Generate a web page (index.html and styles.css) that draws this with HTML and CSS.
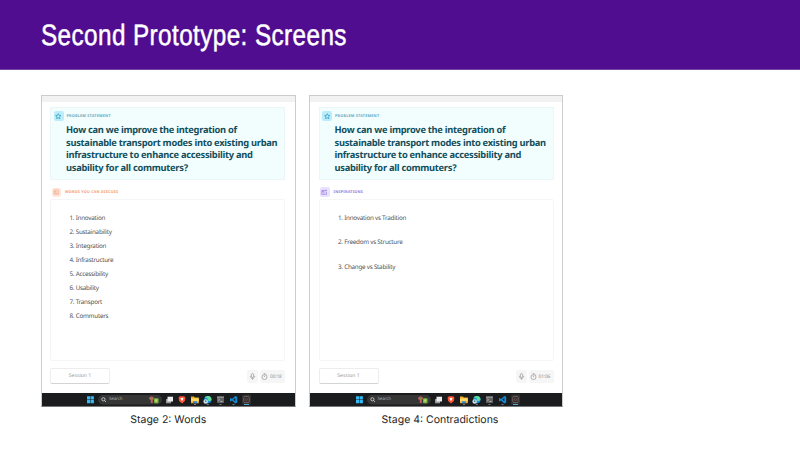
FILE: index.html
```html
<!DOCTYPE html>
<html lang="en">
<head>
<meta charset="utf-8">
<title>Second Prototype: Screens</title>
<link rel="stylesheet" href="styles.css">
</head>
<body>
<svg class="defs" width="0" height="0" aria-hidden="true">
  <symbol id="star" viewBox="0 0 24 24"><path d="M12 2.5l2.9 6.2 6.8.8-5 4.6 1.3 6.8-6-3.4-6 3.4 1.300-6.800-5-4.600 6.800-.8z" fill="none" stroke="currentColor" stroke-width="2.600" stroke-linejoin="round"/></symbol>
  <symbol id="words" viewBox="0 0 24 24"><g fill="none" stroke="currentColor" stroke-width="2.200"><rect x="3" y="3" width="18" height="18" rx="3"/><path d="M7 8h4v4H7zM14 8h3M14 12h3M7 16h10"/></g></symbol>
  <symbol id="inspire" viewBox="0 0 24 24"><g fill="none" stroke="currentColor" stroke-width="2.400"><path d="M14 5H3v16h17V11"/><path d="M3 10h10M8 5v5M7 15h8M18 2v7M14.500 5.500h7"/></g></symbol>
  <symbol id="mic" viewBox="0 0 24 24"><g fill="none" stroke="currentColor" stroke-width="2.400"><rect x="8" y="2" width="8" height="13" rx="4"/><path d="M4.500 11c0 10 15 10 15 0M12 18v5"/></g></symbol>
  <symbol id="watch" viewBox="0 0 24 24"><g fill="none" stroke="currentColor" stroke-width="2.300"><circle cx="12" cy="14" r="8.500"/><path d="M12 9v5M9 2h6M19 5l2 2"/></g></symbol>
  <symbol id="taskbar" viewBox="0 0 166 13">
    <g fill="#35b9f4"><path d="M0 3.300h3.200v3.200H0zM3.700 3.300h3.200v3.200H3.700zM0 7h3.200v3.200H0zM3.700 7h3.200v3.200H3.700z"/></g>
    <rect x="11" y="2" width="64" height="9.500" rx="4.700" fill="#363636"/>
    <g fill="none" stroke="#ddd" stroke-width=".8"><circle cx="16.400" cy="6.300" r="1.600"/><path d="M17.600 7.500l1.400 1.500"/></g>
    <path d="M62 6a2.500 2.500 0 0 1 5 0l-1.200 1v3h-2V7z" fill="#c45c62"/><circle cx="64.500" cy="5.700" r="1.200" fill="#7f8c36"/><rect x="67" y="5.200" width="4.500" height="5" rx="1" fill="#74b943"/><path d="M68.200 6.500h2v2h-2z" fill="#d1dc70"/>
    <path d="M79 6h5v4.300h-5z" fill="#999"/><path d="M80.500 3.700h5.500v4.800h-5.500z" fill="#ececec"/>
    <path d="M92.800 3.200h4.400l1.300 1.500-.6 3.300-2.900 2.500-2.900-2.500-.6-3.300z" fill="#ff5433"/><path d="M93.500 5.300l1.500-.5 1.500.5-.7 1.800-.8.900-.8-.9z" fill="#fff"/>
    <path d="M104 3.500h3l.8 1h4v5.700H104z" fill="#edae2b"/><path d="M104 5.400h7.800v3H104z" fill="#ffd968"/><path d="M106 8.300h4v1.900h-4z" fill="#3285cf"/>
    <circle cx="120.900" cy="6.600" r="3.700" fill="#188bd2"/><path d="M117.400 5a3.700 3.700 0 0 1 7 1.800c-.5 1.700-3 1.500-3.500.6.500-2-1.500-3-3.500-2.400z" fill="#5ddb98"/><circle cx="118.700" cy="8.500" r="2.300" fill="#c7e3ed"/><circle cx="118.700" cy="8.200" r=".9" fill="#4a83a4"/>
    <rect x="130" y="3.500" width="7" height="6.500" rx=".7" fill="#626262"/><path d="M130 3.600h7v1h-7z" fill="#aaa"/><path d="M131.300 5.800l1.200 1-1.200 1M133.500 8.500h2" fill="none" stroke="#eee" stroke-width=".6"/>
    <path d="M148.300 3l1.900.8v5.800l-1.900.8-3.300-3-1.300 1-.7-.4V5.300l.7-.4 1.300 1z" fill="#1689d3"/><path d="M148.300 5.100v3.200l-2-1.600z" fill="#171a1c"/>
    <g transform="translate(2.500)"><rect x="152.500" y="1.400" width="9" height="10.300" rx="1" fill="#303030"/><rect x="154.300" y="3.500" width="5.400" height="6" rx="1" fill="#302526" stroke="#857778" stroke-width=".7"/><circle cx="157" cy="6.500" r="1.100" fill="none" stroke="#88706f" stroke-width=".6"/><path d="M154.500 11h5v1h-5z" fill="#4dabd9"/></g>
    <g fill="#9b9b9b"><path d="M107 11.200h2v.8h-2zM119.800 11.200h2v.8h-2zM132.500 11.200h2v.8h-2zM145.500 11.200h2v.8h-2z"/></g>
  </symbol>
</svg>
<header class="banner"><h1>Second Prototype: Screens</h1></header>
<main class="gallery">
  <figure class="stage first">
    <div class="screen">
      <div class="chrome"></div>
      <div class="app">
        <section class="problem">
          <div class="label blue"><span class="badge"><svg><use href="#star"/></svg></span>PROBLEM STATEMENT</div>
          <h2>How can we improve the integration of<br>sustainable transport modes into existing urban<br>infrastructure to enhance accessibility and<br>usability for all commuters?</h2>
        </section>
        <div class="label heading orange"><span class="badge"><svg><use href="#words"/></svg></span>WORDS YOU CAN DISCUSS</div>
        <section class="panel">
          <ol><li>1. Innovation</li><li>2. Sustainability</li><li>3. Integration</li><li>4. Infrastructure</li><li>5. Accessibility</li><li>6. Usability</li><li>7. Transport</li><li>8. Commuters</li></ol>
        </section>
        <footer class="controls"><div class="session">Session 1</div><div class="mic"><svg><use href="#mic"/></svg></div><div class="timer"><svg><use href="#watch"/></svg><span>00:18</span></div></footer>
      </div>
      <div class="taskbar"><svg><use href="#taskbar"/></svg><span class="search">Search</span></div>
    </div>
    <figcaption>Stage 2: Words</figcaption>
  </figure>
  <figure class="stage second">
    <div class="screen">
      <div class="chrome"></div>
      <div class="app">
        <section class="problem">
          <div class="label blue"><span class="badge"><svg><use href="#star"/></svg></span>PROBLEM STATEMENT</div>
          <h2>How can we improve the integration of<br>sustainable transport modes into existing urban<br>infrastructure to enhance accessibility and<br>usability for all commuters?</h2>
        </section>
        <div class="label heading violet"><span class="badge"><svg><use href="#inspire"/></svg></span>INSPIRATIONS</div>
        <section class="panel">
          <ol class="spaced"><li>1. Innovation vs Tradition</li><li>2. Freedom vs Structure</li><li>3. Change vs Stability</li></ol>
        </section>
        <footer class="controls"><div class="session">Session 1</div><div class="mic"><svg><use href="#mic"/></svg></div><div class="timer"><svg><use href="#watch"/></svg><span>01:06</span></div></footer>
      </div>
      <div class="taskbar"><svg><use href="#taskbar"/></svg><span class="search">Search</span></div>
    </div>
    <figcaption>Stage 4: Contradictions</figcaption>
  </figure>
</main>
</body>
</html>
```
FILE: styles.css
```css
* { box-sizing: border-box; }
body { margin: 0; width: 800px; height: 450px; overflow: hidden; background: #fff; font-family: "Noto Sans", "Open Sans", sans-serif; text-rendering: geometricPrecision; }
svg { display: block; }
.defs { position: absolute; }
.banner { height: 70px; padding: 16px 0 0 41px; background: #500d90; border-bottom: 1px solid #7446a2; }
h1 { width: max-content; margin: 0; color: #fff; font: 400 29.5px/40px "Liberation Sans", sans-serif; white-space: nowrap; -webkit-text-stroke: .5px #fff; letter-spacing: .5px; transform: scaleX(.823); transform-origin: left; }
.gallery { display: flex; gap: 13px; padding: 25px 0 0 40.5px; }
.stage { margin: 0; width: 255.5px; }
.stage.second { width: 254px; }
.screen { height: 312px; border: 1px solid #ccc; border-bottom-color: #777; background: #fff; }
.chrome { height: 6px; background: #f2f2f2; }
.app { height: 291px; width: 244px; padding: 5px 0 0 8.5px; }
.problem { width: 235px; height: 73px; padding: 3px 0 0 2.5px; background: #f2fdfe; border: 1px solid #eaf6f8; }
.label { display: flex; align-items: center; gap: 3px; height: 10px; font-size: 3.8px; font-weight: 700; letter-spacing: .2px; white-space: nowrap; }
.badge { display: grid; place-items: center; width: 10px; height: 10px; border-radius: 2px; }
.badge svg { width: 6.5px; height: 6.5px; }
.blue { color: #6aabc0; }
.blue .badge { background: #bcecfa; color: #2799bd; }
.orange { color: #f59a7a; }
.orange .badge { background: #fee8df; width: 9px; height: 9px; margin-left: 1px; margin-right: 1px; }
.violet { color: #957adc; }
.violet .badge { background: #e9e1ff; margin-right: 1px; }
h2 { margin: 3px 0 0 12.5px; color: #124f5b; font: 700 9.3px/12.6px "Noto Sans", "Open Sans", sans-serif; letter-spacing: -.27px; white-space: nowrap; }
.heading { margin: 7px 0 0 1px; }
.panel { width: 235px; height: 162px; margin-top: 2px; border: 1px solid #f6f6f6; border-radius: 2px; padding: 11px 0 0 18.5px; }
ol { margin: 0; padding: 0; list-style: none; color: #555; font-size: 6.3px; line-height: 14.06px; letter-spacing: -.25px; }
.spaced { line-height: 24.6px; margin-top: -5.4px; }
.controls { display: flex; align-items: flex-start; width: 235px; margin-top: 7px; color: #909090; }
.session { width: 60px; height: 16px; border: 1px solid #ededed; border-bottom-color: #d4d4d4; border-radius: 2px; font-size: 5.1px; line-height: 15px; text-align: center; color: #999; }
.mic { display: grid; place-items: center; width: 11px; height: 13px; margin: 2px 2px 0 auto; background: #f6f6f6; border-radius: 2px; }
.mic svg { width: 7px; height: 7px; }
.timer { display: flex; align-items: center; gap: 2px; width: 25px; height: 13px; margin-top: 2px; padding-left: 1px; background: #f6f6f6; border-radius: 2px; font-size: 4.8px; letter-spacing: -.1px; }
.timer svg { width: 7px; height: 7px; flex: none; }
.taskbar { position: relative; height: 13px; padding-left: 45.5px; background: #1b1c1d; }
.taskbar svg { width: 166px; height: 13px; }
.search { position: absolute; left: 67.5px; top: 3px; color: #aaa; font-size: 4.4px; line-height: 7px; letter-spacing: -.1px; }
figcaption { margin-top: 5px; color: #252525; font: 400 10.5px/15px Inter, sans-serif; text-align: center; white-space: nowrap; }
.second figcaption { padding-left: 8px; }
```
